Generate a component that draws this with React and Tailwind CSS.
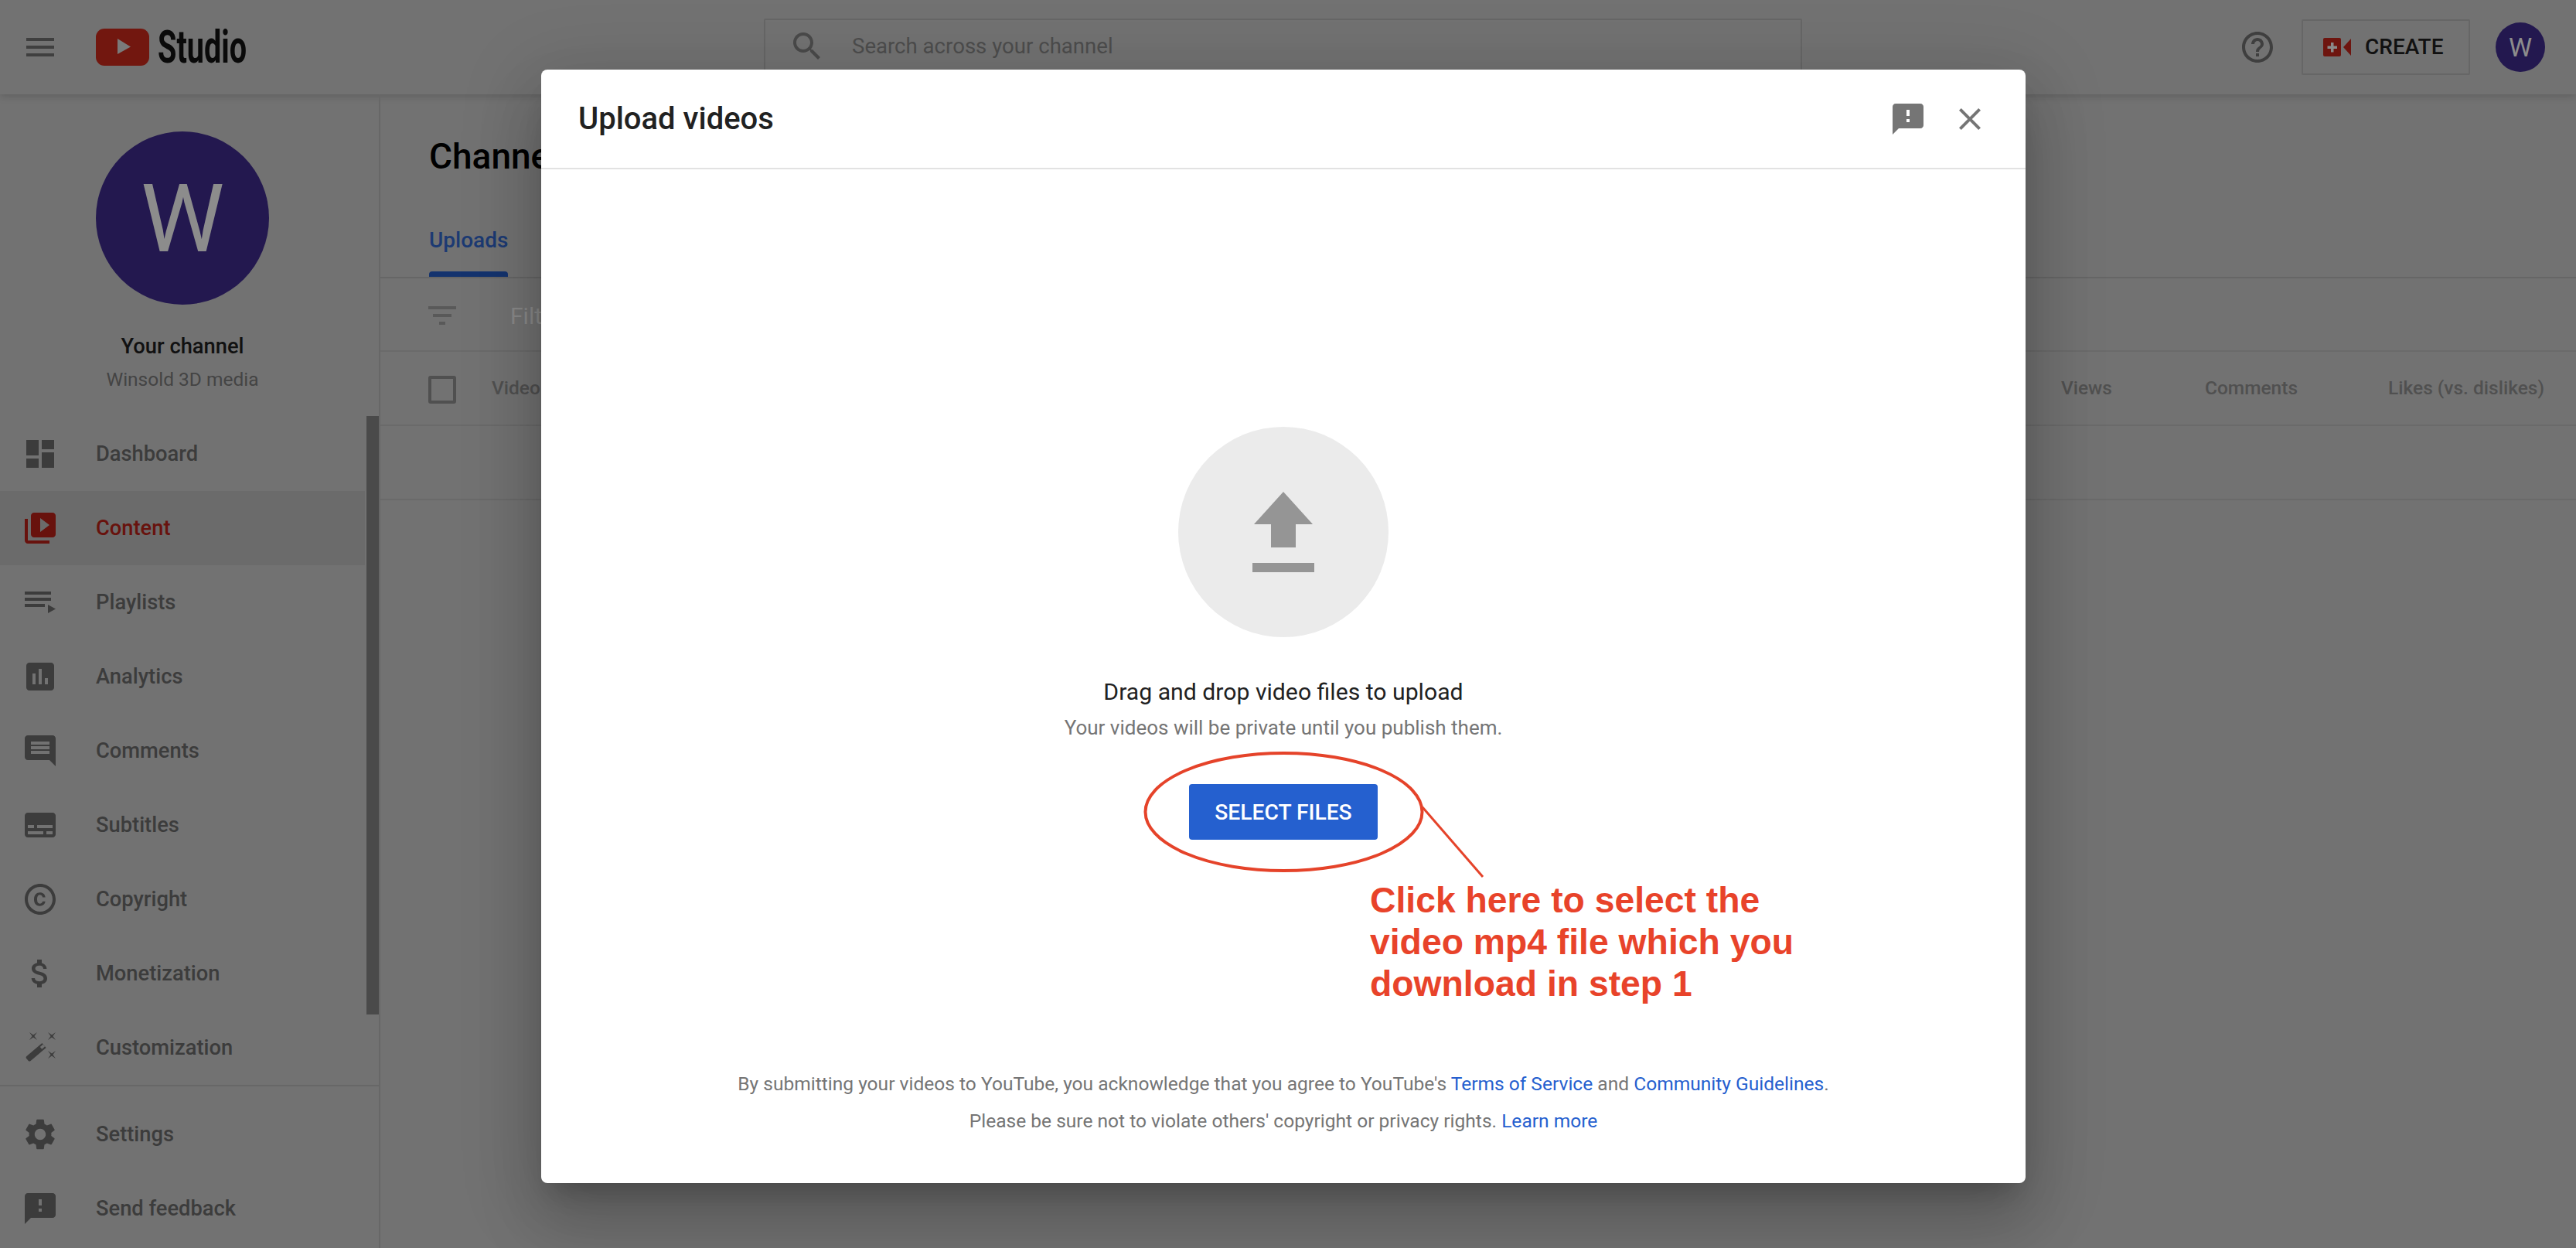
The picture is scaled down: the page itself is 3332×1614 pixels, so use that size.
import React from "react";

const P = {
  dashboard: "M3 13h8V3H3v10zm0 8h8v-6H3v6zm10 0h8V11h-8v10zm0-18v6h8V3h-8z",
  content: "M4 6H2v14c0 1.1.9 2 2 2h14v-2H4V6zm16-4H8c-1.1 0-2 .9-2 2v12c0 1.1.9 2 2 2h12c1.1 0 2-.9 2-2V4c0-1.1-.9-2-2-2zm-8 12.5v-9l6 4.5-6 4.5z",
  playlists: "M2 5h17v2H2zM2 9h17v2H2zM2 13h13v2H2zM17 13.5v5.5l5-2.8z",
  analytics: "M19 3H5c-1.1 0-2 .9-2 2v14c0 1.1.9 2 2 2h14c1.1 0 2-.9 2-2V5c0-1.1-.9-2-2-2zM9 17H7v-7h2v7zm4 0h-2V7h2v10zm4 0h-2v-4h2v4z",
  comments: "M21.99 4c0-1.1-.89-2-1.99-2H4c-1.1 0-2 .9-2 2v12c0 1.1.9 2 2 2h14l4 4-.01-18zM18 14H6v-2h12v2zm0-3H6V9h12v2zm0-3H6V6h12v2z",
  subtitles: "M20 4H4c-1.1 0-2 .9-2 2v12c0 1.1.9 2 2 2h16c1.1 0 2-.9 2-2V6c0-1.1-.9-2-2-2zM4 12h4v2H4v-2zm10 6H4v-2h10v2zm6 0h-4v-2h4v2zm0-4H10v-2h10v2z",
  copyright: "M11.88 9.14c1.28.06 1.61 1.15 1.63 1.66h1.79c-.08-1.98-1.49-3.19-3.45-3.19C9.64 7.61 8 9 8 12.14c0 1.94.93 4.24 3.84 4.24 2.22 0 3.41-1.65 3.44-2.95h-1.79c-.03.59-.45 1.38-1.63 1.44-1.31-.04-1.86-1.06-1.86-2.73 0-2.89 1.28-2.98 1.88-3zM12 2C6.48 2 2 6.48 2 12s4.48 10 10 10 10-4.48 10-10S17.52 2 12 2zm0 18c-4.41 0-8-3.59-8-8s3.59-8 8-8 8 3.59 8 8-3.59 8-8 8z",
  money: "M11.8 10.9c-2.27-.59-3-1.2-3-2.15 0-1.09 1.01-1.85 2.7-1.85 1.78 0 2.44.85 2.5 2.1h2.21c-.07-1.72-1.12-3.3-3.21-3.81V3h-3v2.16c-1.94.42-3.5 1.68-3.5 3.61 0 2.31 1.91 3.46 4.7 4.13 2.5.6 3 1.48 3 2.41 0 .69-.49 1.79-2.7 1.79-2.06 0-2.87-.92-2.98-2.1h-2.2c.12 2.19 1.76 3.42 3.68 3.83V21h3v-2.15c1.95-.37 3.5-1.5 3.5-3.55 0-2.84-2.43-3.81-4.7-4.4z",
  wand: "M3.2 17.5L13.2 9l2.6 3-10 8.5c-.5.4-1 .4-1.4 0l-1.3-1.5c-.4-.5-.4-1.100.1-1.500zM11.9 11.500L13.100 12.900 15 11.300 13.800 9.900zM5 2l2.500 1.800L10 2 8.200 4.500 10 7 7.500 5.200 5 7 6.800 4.500zM17 2l2.500 1.800L22 2l-1.800 2.500L22 7l-2.500-1.800L17 7l1.800-2.500zM17 14l2.500 1.800L22 14l-1.800 2.500L22 19l-2.500-1.800L17 19l1.800-2.500z",
  settings: "M19.14 12.94c.04-.3.06-.61.06-.94 0-.32-.02-.64-.07-.94l2.03-1.58c.18-.14.23-.41.12-.61l-1.92-3.32c-.12-.22-.37-.29-.59-.22l-2.39.96c-.5-.38-1.03-.7-1.62-.94l-.36-2.54c-.04-.24-.24-.41-.48-.41h-3.84c-.24 0-.43.17-.47.41l-.36 2.54c-.59.24-1.13.57-1.62.94l-2.39-.96c-.22-.08-.47 0-.59.22L2.74 8.87c-.12.21-.08.47.12.61l2.03 1.58c-.05.3-.09.63-.09.94s.02.64.07.94l-2.03 1.58c-.18.14-.23.41-.12.61l1.92 3.32c.12.22.37.29.59.22l2.39-.96c.5.38 1.03.7 1.62.94l.36 2.54c.05.24.24.41.48.41h3.84c.24 0 .44-.17.47-.41l.36-2.54c.59-.24 1.13-.56 1.62-.94l2.39.96c.22.08.47 0 .59-.22l1.92-3.32c.12-.22.07-.47-.12-.61l-2.01-1.58zM12 15.6c-1.98 0-3.6-1.62-3.6-3.6s1.62-3.6 3.6-3.6 3.6 1.62 3.6 3.6-1.62 3.6-3.6 3.6z",
  feedback: "M20 2H4c-1.1 0-1.99.9-1.99 2L2 22l4-4h14c1.1 0 2-.9 2-2V4c0-1.1-.9-2-2-2zm-7 12h-2v-2h2v2zm0-4h-2V6h2v4z",
  menu: "M3 18h18v-2H3v2zm0-5h18v-2H3v2zm0-7v2h18V6H3z",
  filter: "M10 18h4v-2h-4v2zM3 6v2h18V6H3zm3 7h12v-2H6v2z",
  search: "M15.5 14h-.79l-.28-.27C15.41 12.59 16 11.11 16 9.5 16 5.91 13.09 3 9.5 3S3 5.91 3 9.5 5.91 16 9.5 16c1.61 0 3.09-.59 4.23-1.57l.27.28v.79l5 4.99L20.49 19l-4.99-5zm-6 0C7.01 14 5 11.99 5 9.5S7.01 5 9.5 5 14 7.01 14 9.5 11.99 14 9.5 14z",
  help: "M11 18h2v-2h-2v2zm1-16C6.48 2 2 6.48 2 12s4.48 10 10 10 10-4.48 10-10S17.52 2 12 2zm0 18c-4.41 0-8-3.59-8-8s3.59-8 8-8 8 3.59 8 8-3.59 8-8 8zm0-14c-2.21 0-4 1.79-4 4h2c0-1.1.9-2 2-2s2 .9 2 2c0 2-3 1.75-3 5h2c0-2.25 3-2.5 3-5 0-2.21-1.79-4-4-4z",
  close: "M19 6.41L17.59 5 12 10.59 6.41 5 5 6.41 10.59 12 5 17.59 6.41 19 12 13.41 17.59 19 19 17.59 13.41 12z",
};

function Icon({ d, className = "" }) {
  return (
    <svg viewBox="0 0 24 24" className={`w-[48px] h-[48px] shrink-0 fill-current ${className}`}>
      <path d={d} />
    </svg>
  );
}

function NavItem({ d, label, active }) {
  return (
    <div className={`flex items-center h-[96px] pl-[28px] gap-[48px] ${active ? "bg-[#6b6b6b] text-[#68120d]" : "text-[#3c3c3c]"}`}>
      <Icon d={d} />
      <span className="text-[27.3px] font-medium">{label}</span>
    </div>
  );
}

function Sidebar() {
  return (
    <aside className="relative w-[492px] shrink-0 border-r-2 border-[#676767] flex flex-col h-[1492px]">
      <div className="flex flex-col items-center pr-[18px] h-[417px]">
        <div className="mt-[48px] w-[224px] h-[224px] pt-[4px] rounded-full bg-[#23184f] flex items-center justify-center text-[122px] text-[#8c8c8c] leading-none">W</div>
        <div className="mt-[36px] text-[27.3px] font-medium text-[#111111] leading-[36px]">Your channel</div>
        <div className="mt-[7px] text-[24.5px] text-[#444444] leading-[36px]">Winsold 3D media</div>
      </div>
      <nav className="flex flex-col pr-[18px]">
        <NavItem d={P.dashboard} label="Dashboard" />
        <NavItem d={P.content} label="Content" active />
        <NavItem d={P.playlists} label="Playlists" />
        <NavItem d={P.analytics} label="Analytics" />
        <NavItem d={P.comments} label="Comments" />
        <NavItem d={P.subtitles} label="Subtitles" />
        <NavItem d={P.copyright} label="Copyright" />
        <NavItem d={P.money} label="Monetization" />
        <NavItem d={P.wand} label="Customization" />
      </nav>
      <div className="border-t-2 border-[#676767] pt-[14px] flex flex-col">
        <NavItem d={P.settings} label="Settings" />
        <NavItem d={P.feedback} label="Send feedback" />
      </div>
      <div className="absolute right-0 top-[416px] w-[16px] h-[774px] bg-[#4a4a4a]" />
    </aside>
  );
}

function Main() {
  return (
    <main className="flex-1 min-w-0">
      <div className="h-[176px] pl-[63px] pt-[58px] text-[46px] font-medium text-black leading-[44px]">Channel content</div>
      <div className="h-[62px] pl-[63px] border-b-2 border-[#666666] flex">
        <div className="flex flex-col justify-between">
          <span className="text-[28px] font-medium text-[#1c3a73] leading-[32px] mt-[-3px]">Uploads</span>
          <span className="h-[7px] rounded-t-[4px] bg-[#14336e]" />
        </div>
      </div>
      <div className="h-[95px] pl-[56px] pt-[3px] border-b-2 border-[#6a6a6a] flex items-center gap-[64px]">
        <Icon d={P.filter} className="text-[#595959]" />
        <span className="text-[30px] text-[#8a8a8a]">Filter</span>
      </div>
      <div className="h-[96px] pl-[62px] pr-[41px] pt-[1px] border-b-2 border-[#6a6a6a] flex items-center text-[24.5px] font-medium text-[#505050]">
        <span className="w-[36px] h-[36px] rounded-[3px] border-[4px] border-[#505050] shrink-0 mt-[2px]" />
        <span className="ml-[46px]">Video</span>
        <span className="ml-auto">Views</span>
        <span className="ml-[120px]">Comments</span>
        <span className="ml-[117px]">Likes (vs. dislikes)</span>
      </div>
      <div className="h-[96px] border-b-2 border-[#6a6a6a]" />
    </main>
  );
}

function Header() {
  return (
    <header className="h-[122px] flex items-center shadow-[0_2px_10px_rgba(0,0,0,0.18)] relative">
      <div className="w-[988px] shrink-0 flex items-center pl-[28px]">
        <Icon d={P.menu} className="text-[#3f3f3f]" />
        <svg viewBox="0 0 69 48" className="w-[69px] h-[48px] ml-[48px] shrink-0">
          <rect width="69" height="48" rx="11" fill="#72170f" />
          <path d="M28 13 L45 23.500 L28 33 Z" fill="#7a7a7a" />
        </svg>
        <span className="ml-[11px] w-[113px] inline-block origin-left scale-x-[0.66] text-[60px] leading-none font-bold text-[#0a0a0a] whitespace-nowrap">Studio</span>
      </div>
      <div className="w-[1343px] h-[72px] mb-[2px] border-2 border-[#666666] rounded-[2px] flex items-center pl-[30px] shrink-0">
        <Icon d={P.search} className="text-[#4a4a4a]" />
        <span className="ml-[34px] text-[27.6px] text-[#4d4d4d]">Search across your channel</span>
      </div>
      <div className="ml-auto flex items-center pr-[40px]">
        <Icon d={P.help} className="text-[#3f3f3f]" />
        <div className="ml-[33px] w-[218px] h-[72px] border-2 border-[#666666] rounded-[2px] flex items-center pl-[26px]">
          <svg viewBox="0 0 36 24" className="w-[36px] h-[24px] shrink-0">
            <rect width="23" height="24" rx="2" fill="#6e150f" />
            <path d="M10 6h3.500v4.500H18V14h-4.500v4.500H10V14H5.500v-3.500H10z" fill="#8a8a8a" />
            <path d="M26 12 L36 1 V23 Z" fill="#6e150f" />
          </svg>
          <span className="ml-[18px] text-[28px] font-medium text-[#111111]">CREATE</span>
        </div>
        <div className="ml-[33px] w-[64px] h-[64px] rounded-full bg-[#23184f] flex items-center justify-center text-[34px] text-[#8c8c8c]">W</div>
      </div>
    </header>
  );
}

function Modal() {
  return (
    <div className="absolute left-[700px] top-[90px] w-[1920px] h-[1440px] bg-white rounded-[8px] flex flex-col shadow-[0_51px_81px_6px_rgba(0,0,0,0.14),0_19px_98px_17px_rgba(0,0,0,0.12),0_23px_32px_-15px_rgba(0,0,0,0.2)]">
      <div className="h-[129px] shrink-0 border-b-2 border-[#e2e2e2] flex items-center pl-[48px] pr-[48px]">
        <h1 className="text-[40px] font-medium text-[#212121] leading-none">Upload videos</h1>
        <Icon d={P.feedback} className="ml-auto text-[#757575]" />
        <Icon d={P.close} className="ml-[32px] text-[#757575]" />
      </div>
      <div className="flex-1 flex flex-col items-center">
        <div className="mt-[333px] w-[272px] h-[272px] rounded-full bg-[#ebebeb] flex items-center justify-center">
          <svg viewBox="0 0 80 104" className="w-[80px] h-[104px] fill-[#959595]">
            <path d="M40 0 L78 42 H56 V72 H24 V42 H2 Z M0 92 H80 V104 H0 Z" />
          </svg>
        </div>
        <p className="mt-[50px] text-[30.2px] text-[#212121] leading-[42px]">Drag and drop video files to upload</p>
        <p className="mt-[5px] text-[26px] text-[#757575] leading-[40px]">Your videos will be private until you publish them.</p>
        <button className="mt-[53px] w-[244px] h-[72px] pt-[2px] rounded-[4px] bg-[#2560cf] text-white text-[28.2px] font-medium uppercase">Select files</button>
        <p className="mt-[292px] text-[24.55px] text-[#757575] leading-[48px]">
          By submitting your videos to YouTube, you acknowledge that you agree to YouTube's{" "}
          <span className="text-[#2560cf]">Terms of Service</span> and{" "}
          <span className="text-[#2560cf]">Community Guidelines</span>.
        </p>
        <p className="text-[24.55px] text-[#757575] leading-[48px]">
          Please be sure not to violate others' copyright or privacy rights.{" "}
          <span className="text-[#2560cf]">Learn more</span>
        </p>
      </div>
      <svg viewBox="0 0 460 170" className="absolute left-[778px] top-[880px] w-[460px] h-[170px] fill-none stroke-[#e5432a]" >
        <ellipse cx="182.5" cy="80" rx="179" ry="76" strokeWidth="4" />
        <path d="M362 74 L440 164" strokeWidth="3" />
      </svg>
      <div className="absolute left-[1072px] top-[1047px] text-[46.3px] font-bold leading-[54px] text-[#e8432a] whitespace-nowrap font-['Liberation_Sans',Arial,sans-serif]">
        Click here to select the<br />video mp4 file which you<br />download in step 1
      </div>
    </div>
  );
}

export default function App() {
  return (
    <div className="relative w-[3332px] h-[1614px] overflow-hidden bg-[#727272] font-['Roboto',sans-serif]">
      <Header />
      <div className="flex">
        <Sidebar />
        <Main />
      </div>
      <Modal />
    </div>
  );
}
